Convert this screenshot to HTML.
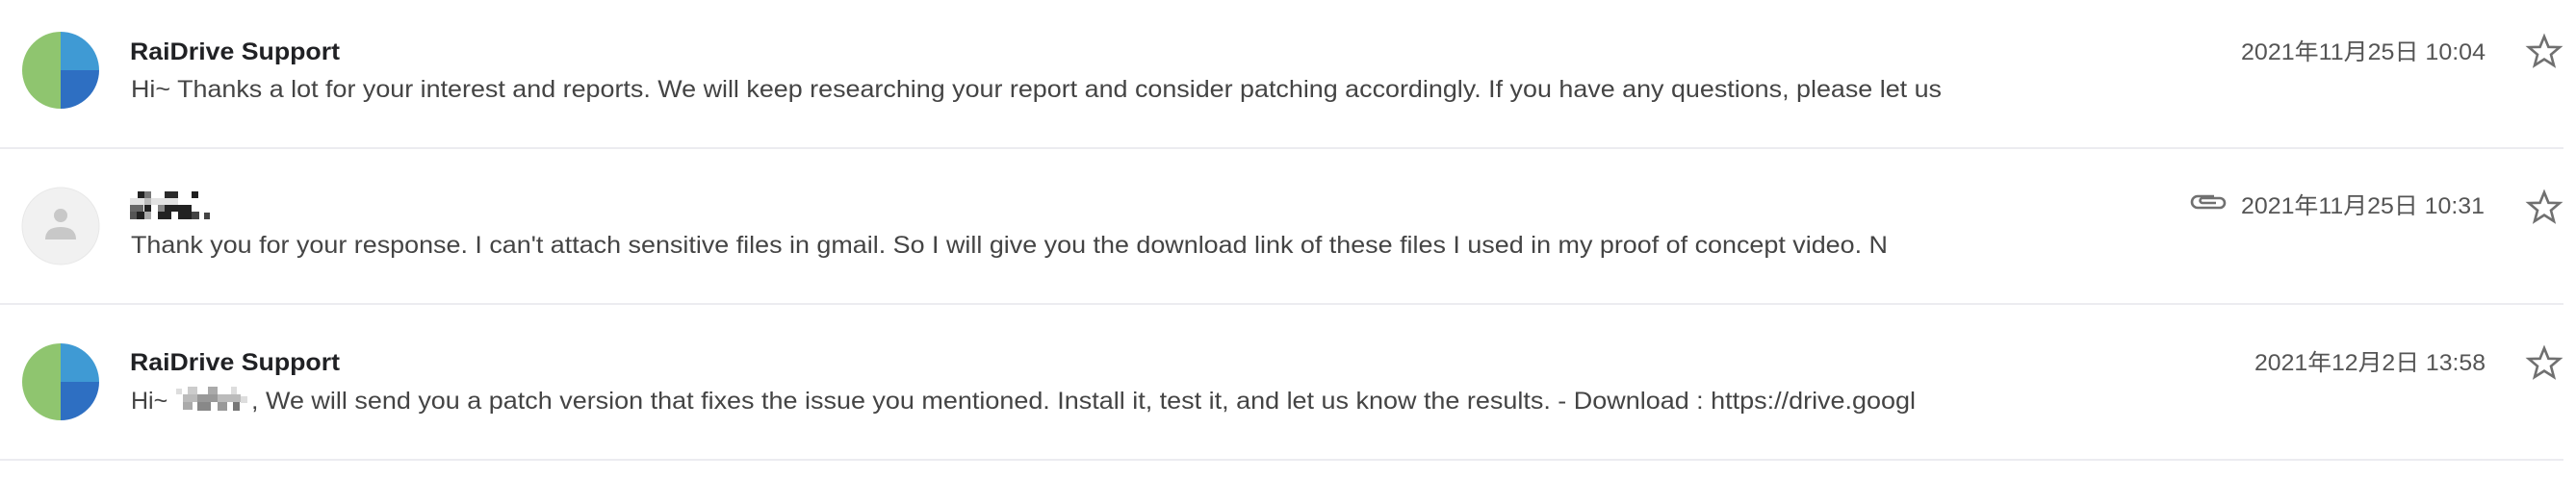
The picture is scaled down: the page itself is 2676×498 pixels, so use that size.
<!DOCTYPE html>
<html><head><meta charset="utf-8"><style>
html,body{margin:0;padding:0;background:#fff;width:2676px;height:498px;overflow:hidden}
svg{display:block}
text{font-family:"Liberation Sans","Noto Sans CJK JP",sans-serif}
</style></head><body>
<svg width="2676" height="498" viewBox="0 0 2676 498" xmlns="http://www.w3.org/2000/svg">
<defs>
<g id="rd">
<path d="M40 0 A40 40 0 0 0 40 80 Z" fill="#8fc56f"/>
<path d="M40 0 A40 40 0 0 1 80 40 L40 40 Z" fill="#3f9ad4"/>
<path d="M40 40 L80 40 A40 40 0 0 1 40 80 Z" fill="#2e6fc2"/>
</g>
<path id="star" d="M0 -16 L4.4 -5.2 L16 -4.9 L7 2.7 L10 14 L0 7.6 L-10 14 L-7 2.7 L-16 -4.9 L-4.4 -5.2 Z" fill="none" stroke="#707070" stroke-width="2.6" stroke-linejoin="miter"/>
</defs>
<!-- separators -->
<rect x="0" y="153" width="2663" height="2" fill="#ececf0"/>
<rect x="0" y="315" width="2663" height="2" fill="#ececf0"/>
<rect x="0" y="477" width="2663" height="2" fill="#ececf0"/>

<!-- row 1 -->
<use href="#rd" x="23" y="33"/>
<text x="135" y="62" font-size="25" font-weight="bold" fill="#202124" textLength="218" lengthAdjust="spacingAndGlyphs">RaiDrive Support</text>
<text x="136" y="101" font-size="25" fill="#444" textLength="1881" lengthAdjust="spacingAndGlyphs">Hi~ Thanks a lot for your interest and reports. We will keep researching your report and consider patching accordingly. If you have any questions, please let us</text>
<text x="2328" y="62" font-size="24" fill="#555" textLength="254" lengthAdjust="spacingAndGlyphs">2021年11月25日 10:04</text>
<use href="#star" x="2643" y="54"/>

<!-- row 2 -->
<circle cx="63" cy="235" r="40" fill="#f1f1f1" stroke="#e8e8e8" stroke-width="1"/>
<circle cx="63" cy="224" r="7" fill="#c8c8c8"/>
<path d="M47 249 Q47 236 63 236 Q79 236 79 249 Z" fill="#c8c8c8"/>
<g>
<rect x="143" y="199" width="7" height="7" fill="#222"/>
<rect x="150" y="199" width="7" height="7" fill="#777"/>
<rect x="171" y="199" width="14" height="7" fill="#2a2a2a"/>
<rect x="199" y="199" width="7" height="7" fill="#1e1e1e"/>
<rect x="135" y="206" width="50" height="7" fill="#e2e2e2"/>
<rect x="150" y="206" width="7" height="7" fill="#bbb"/>
<rect x="135" y="213" width="14" height="7" fill="#666"/>
<rect x="150" y="213" width="7" height="7" fill="#222"/>
<rect x="164" y="213" width="7" height="7" fill="#888"/>
<rect x="171" y="213" width="28" height="7" fill="#222"/>
<rect x="135" y="220" width="7" height="8" fill="#555"/>
<rect x="142" y="220" width="8" height="8" fill="#222"/>
<rect x="150" y="220" width="7" height="8" fill="#aaa"/>
<rect x="164" y="220" width="14" height="8" fill="#222"/>
<rect x="185" y="220" width="14" height="8" fill="#222"/>
<rect x="199" y="220" width="8" height="8" fill="#444"/>
<rect x="212" y="221" width="6" height="7" fill="#444"/>
</g>
<text x="136" y="263" font-size="25" fill="#444" textLength="1825" lengthAdjust="spacingAndGlyphs">Thank you for your response. I can't attach sensitive files in gmail. So I will give you the download link of these files I used in my proof of concept video. N</text>
<path d="M2300 204 H2283 A6 6 0 0 0 2283 216 H2306 A5 5 0 0 0 2306 206 H2288 A2 2 0 0 0 2288 211 H2302" fill="none" stroke="#707070" stroke-width="2.6"/>
<text x="2328" y="222" font-size="24" fill="#555" textLength="253" lengthAdjust="spacingAndGlyphs">2021年11月25日 10:31</text>
<use href="#star" x="2643" y="216"/>

<!-- row 3 -->
<use href="#rd" x="23" y="357"/>
<text x="135" y="385" font-size="25" font-weight="bold" fill="#202124" textLength="218" lengthAdjust="spacingAndGlyphs">RaiDrive Support</text>
<text x="136" y="425" font-size="25" fill="#444">Hi~</text>
<g>
<rect x="183" y="404" width="6" height="6" fill="#ddd"/>
<rect x="195" y="402" width="10" height="8" fill="#ccc"/>
<rect x="216" y="402" width="10" height="8" fill="#aaa"/>
<rect x="240" y="402" width="6" height="8" fill="#ddd"/>
<rect x="190" y="410" width="60" height="8" fill="#bbb"/>
<rect x="205" y="410" width="21" height="8" fill="#999"/>
<rect x="190" y="418" width="10" height="8" fill="#aaa"/>
<rect x="205" y="418" width="14" height="9" fill="#888"/>
<rect x="226" y="418" width="10" height="9" fill="#999"/>
<rect x="242" y="418" width="7" height="9" fill="#777"/>
<rect x="250" y="412" width="7" height="7" fill="#ddd"/>
</g>
<text x="261" y="425" font-size="25" fill="#444" textLength="1729" lengthAdjust="spacingAndGlyphs">, We will send you a patch version that fixes the issue you mentioned. Install it, test it, and let us know the results. - Download : https://drive.googl</text>
<text x="2342" y="385" font-size="24" fill="#555" textLength="240" lengthAdjust="spacingAndGlyphs">2021年12月2日 13:58</text>
<use href="#star" x="2643" y="378"/>
</svg>
</body></html>
